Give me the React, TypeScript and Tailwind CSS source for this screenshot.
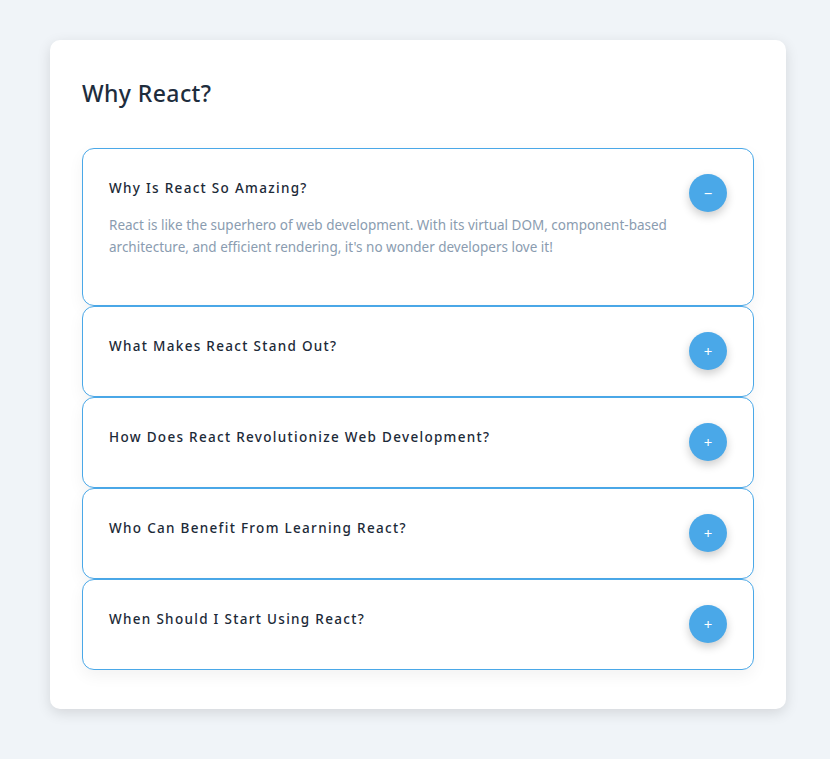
import { useState } from "react";

const faqs = [
  {
    q: "Why Is React So Amazing?",
    a: "React is like the superhero of web development. With its virtual DOM, component-based architecture, and efficient rendering, it's no wonder developers love it!",
  },
  {
    q: "What Makes React Stand Out?",
    a: "Its declarative style and huge ecosystem make building interfaces feel natural.",
  },
  {
    q: "How Does React Revolutionize Web Development?",
    a: "By breaking UIs into reusable components that update efficiently.",
  },
  {
    q: "Who Can Benefit From Learning React?",
    a: "Anyone who wants to build modern, interactive web apps.",
  },
  {
    q: "When Should I Start Using React?",
    a: "Right now — there's never been a better time.",
  },
];

const App = () => {
  const [open, setOpen] = useState<number | null>(0);

  return (
    <div className="min-h-[759px] bg-[#f0f4f8] pt-10 px-[50px] pb-10 font-['Noto_Sans',sans-serif]">
      <div className="w-[736px] bg-white rounded-[10px] shadow-[0_4px_14px_rgba(0,0,0,0.12)] px-8 pt-[33px] pb-[39px]">
        <h2 className="text-[23px] font-medium text-[#1e2d3d] tracking-[0.4px] leading-[40px]">
          Why React?
        </h2>
        <div className="mt-[35px] flex flex-col">
          {faqs.map((f, i) => {
            const isOpen = open === i;
            return (
              <div
                key={f.q}
                className="border border-[#4aa8e8] rounded-xl bg-white shadow-[0_6px_16px_rgba(0,0,0,0.05)] px-[26px] pt-[25px] pb-[26px] flex justify-between gap-3"
              >
                <div className="flex-1">
                  <h3 className="text-[13.5px] font-medium text-[#1c2a38] tracking-[1.3px] leading-[28px]">
                    {f.q}
                  </h3>
                  {isOpen && (
                    <p className="mt-[12px] mb-[21px] text-[13.5px] leading-[22px] text-[#8a9cb0]">
                      {f.a}
                    </p>
                  )}
                </div>
                <button
                  onClick={() => setOpen(isOpen ? null : i)}
                  className="shrink-0 w-[38px] h-[38px] rounded-full bg-[#4aa8e8] text-white text-[15px] leading-none flex items-center justify-center shadow-[0_4px_10px_rgba(0,0,0,0.2)]"
                >
                  {isOpen ? "−" : "+"}
                </button>
              </div>
            );
          })}
        </div>
      </div>
    </div>
  );
};

export default App;
